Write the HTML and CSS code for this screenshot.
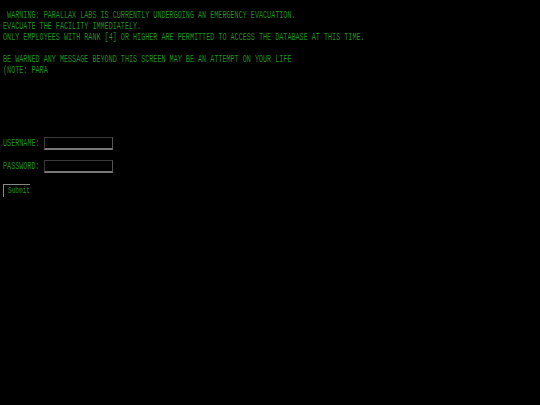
FILE: index.html
```html
<!DOCTYPE html>
<html lang="en">
<head>
    <meta charset="UTF-8">
    <meta name="viewport" content="width=device-width, initial-scale=1.0">
    <title>Parallax Labs</title>
    <link rel="stylesheet" href="styles.css">
</head>
<body>
    <div class="notice">
        <p class="line"> WARNING: PARALLAX LABS IS CURRENTLY UNDERGOING AN EMERGENCY EVACUATION.</p>
        <p class="line">EVACUATE THE FACILITY IMMEDIATELY.</p>
        <p class="line">ONLY EMPLOYEES WITH RANK [4] OR HIGHER ARE PERMITTED TO ACCESS THE DATABASE AT THIS TIME.</p>
        <p class="line">&nbsp;</p>
        <p class="line">BE WARNED ANY MESSAGE BEYOND THIS SCREEN MAY BE AN ATTEMPT ON YOUR LIFE</p>
        <p class="line">(NOTE: PARA</p>
    </div>

    <form class="login" onsubmit="return false">
        <div class="field">
            <label for="username"><span class="squish">USERNAME:</span></label>
            <input type="text" id="username">
        </div>
        <div class="field">
            <label for="password"><span class="squish">PASSWORD:</span></label>
            <input type="password" id="password">
        </div>
        <button class="submit" type="submit"><span class="squish">Submit</span></button>
    </form>
</body>
</html>
```

FILE: styles.css
```css
* {
    margin: 0;
    padding: 0;
    box-sizing: border-box;
}

body {
    background: #000;
    color: #1f8f1f;
    font-family: 'Liberation Mono', 'Courier New', monospace;
    font-size: 10px;
    min-height: 100vh;
}

.notice {
    padding: 10px 3px 0;
}

.line {
    white-space: pre;
    line-height: 11px;
    transform: scaleX(0.677);
    transform-origin: left center;
}

.squish {
    display: inline-block;
    white-space: pre;
    transform: scaleX(0.677);
    transform-origin: left center;
}

.login {
    padding: 61px 3px 0;
}

.field {
    display: flex;
    align-items: center;
    height: 13px;
    margin-bottom: 10px;
}

label {
    width: 41px;
    line-height: 13px;
}

input {
    width: 69px;
    height: 13px;
    background: #000;
    border: 1px solid #3a3a3a;
    border-bottom: 2px solid #777;
    border-right-color: #555;
    color: #1f8f1f;
    outline: none;
    font: inherit;
}

/* sits right under the last field; margins collapse with .field */
.submit {
    display: block;
    width: 27px;
    height: 13px;
    margin-top: 11px;
    background: #000;
    color: #1f8f1f;
    border: none;
    border-top: 1px solid #8a8a8a;
    border-left: 1px solid #8a8a8a;
    font-family: 'Liberation Mono', 'Courier New', monospace;
    font-size: 9px;
    text-align: left;
    padding-left: 4px;
    cursor: pointer;
}
```
